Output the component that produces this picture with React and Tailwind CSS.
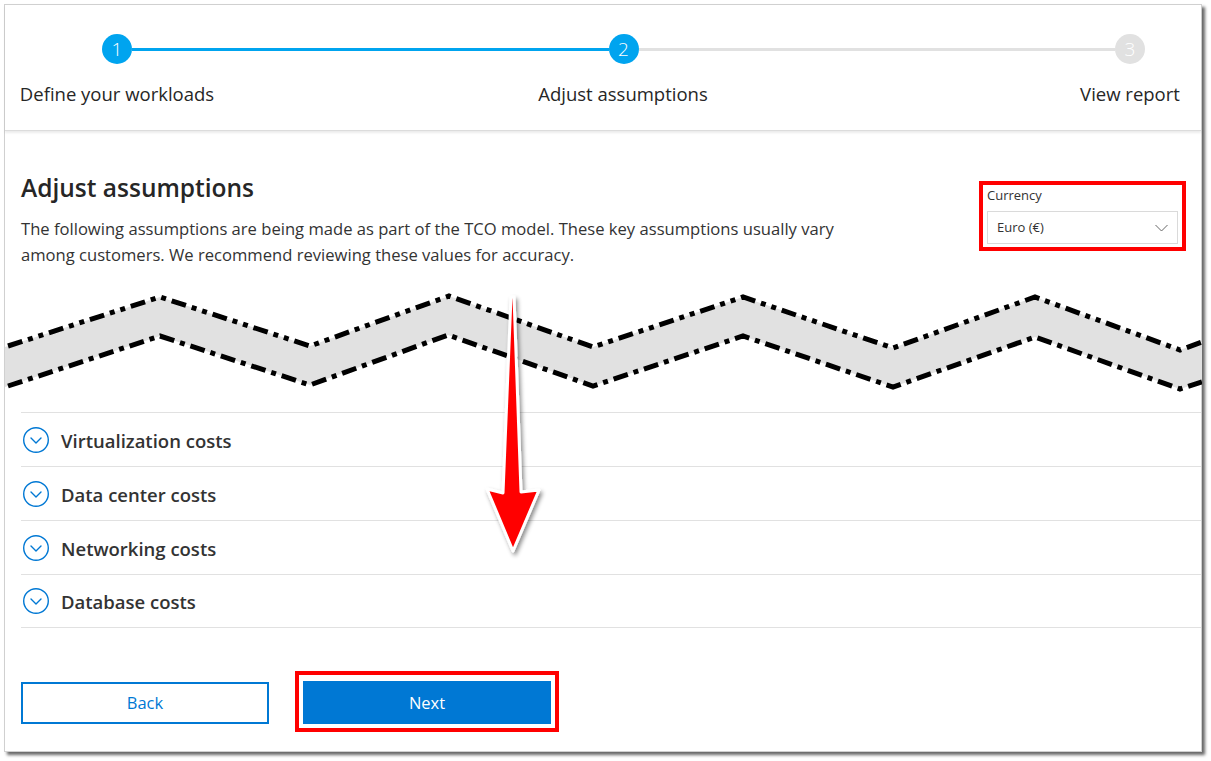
const sections = [
  'Virtualization costs',
  'Data center costs',
  'Networking costs',
  'Database costs',
]

function StepDot({ n, active }) {
  return (
    <div
      className={`flex h-[30px] w-[30px] shrink-0 items-center justify-center rounded-full text-[19px] font-light leading-none text-white ${
        active ? 'bg-[#00a4ef]' : 'bg-[#e1e1e1]'
      }`}
    >
      {n}
    </div>
  )
}

function ChevronCircle() {
  return (
    <svg width="28" height="28" viewBox="0 0 28 28" className="shrink-0">
      <circle cx="14" cy="14" r="12.3" fill="none" stroke="#0078d4" strokeWidth="1.4" />
      <polyline
        points="9,12 14,17 19,12"
        fill="none"
        stroke="#0078d4"
        strokeWidth="1.4"
        strokeLinecap="round"
        strokeLinejoin="round"
      />
    </svg>
  )
}

// torn-paper break between intro and the accordion
function TornEdge() {
  const top = '8,347 160,298 310,347 449,297 593,348 743,298 893,349 1035,298 1180,351 1202,343'
  const bottom = '8,387 160,337 310,386 448,336 593,387 743,337 893,388 1035,338 1180,390 1202,383'
  const band = `5,348 ${top} 1202,383 ${bottom.split(' ').reverse().join(' ')} 5,388`
  return (
    <svg width="1197" height="112" viewBox="5 288 1197 112" className="block">
      <polygon points={band} fill="#e1e1e1" />
      <polyline points={top} fill="none" stroke="#000" strokeWidth="5" strokeDasharray="15 6 5 6 5 6" />
      <polyline points={bottom} fill="none" stroke="#000" strokeWidth="5" strokeDasharray="15 6 5 6" />
    </svg>
  )
}

export default function App() {
  return (
    <div className="relative h-[761px] w-[1211px] overflow-hidden bg-white font-['Open_Sans',sans-serif] text-[#333]">
      <div className="ml-[4px] mt-[4px] flex h-[748px] w-[1198px] flex-col border border-[#d0d0d0] bg-white shadow-[3px_3px_3px_rgba(0,0,0,0.6)]">
        {/* stepper */}
        <header className="h-[126px] border-b border-[#dcdcdc] pt-[29px] shadow-[0_2px_2px_rgba(0,0,0,0.08)]">
          <div className="flex items-center pl-[97px] pr-[56px]">
            <StepDot n="1" active />
            <div className="h-[3px] flex-1 bg-[#00a4ef]" />
            <StepDot n="2" active />
            <div className="h-[3px] flex-1 bg-[#e1e1e1]" />
            <StepDot n="3" />
          </div>
          <div className="mt-[16px] flex pl-[12px] text-[18.5px] leading-[28px] text-[#262626]">
            <span className="w-[200px] text-center">Define your workloads</span>
            <span className="ml-[306px] w-[200px] text-center">Adjust assumptions</span>
            <span className="ml-[347px] w-[120px] text-center">View report</span>
          </div>
        </header>

        {/* intro */}
        <div className="flex justify-between pl-[16px] pr-[15px] pt-[41px]">
          <div>
            <h1 className="text-[24.5px] font-semibold leading-[32px] text-[#262626]">Adjust assumptions</h1>
            <p className="mt-[12px] text-[16.6px] leading-[26px] text-[#333]">
              The following assumptions are being made as part of the TCO model. These key assumptions usually vary
              <br />
              among customers. We recommend reviewing these values for accuracy.
            </p>
          </div>
          <div className="mt-[9px] h-[70px] w-[207px] border-4 border-[#ff0000] px-[4px] pt-[2px]">
            <div className="text-[13px] leading-[16px] text-[#333]">Currency</div>
            <div className="mt-[8px] flex h-[33px] items-center justify-between border border-[#dadada] pl-[9px] pr-[9px] pt-[1px] text-[13px] text-[#333]">
              <span>Euro (€)</span>
              <svg width="13" height="8" viewBox="0 0 13 8">
                <polyline points="0.5,1 6.5,7 12.5,1" fill="none" stroke="#666" strokeWidth="1" />
              </svg>
            </div>
          </div>
        </div>

        <div className="mt-[19px]">
          <TornEdge />
        </div>

        {/* cost sections */}
        <div className="mt-[13px] pl-[16px]">
          {sections.map((s) => (
            <div
              key={s}
              className="flex h-[54px] items-center gap-[11px] border-t border-[#e1e1e1] pl-[1px] last:border-b"
            >
              <ChevronCircle />
              <span className="pt-[2px] text-[18.5px] font-semibold text-[#333]">{s}</span>
            </div>
          ))}
        </div>

        <div className="mt-[43px] flex items-center gap-[26px] pl-[16px]">
          <button
            type="button"
            className="mt-[2px] h-[42px] w-[248px] border-2 border-[#0078d4] bg-white pt-[2px] text-[16.5px] text-[#0078d4]"
          >
            Back
          </button>
          <div className="border-4 border-[#ff0000] px-[4px] pb-[4px] pt-[6px]">
            <button type="button" className="block h-[43px] w-[248px] bg-[#0078d4] pt-[2px] text-[16.5px] text-white">
              Next
            </button>
          </div>
        </div>
      </div>

      {/* annotation arrow */}
      <svg className="pointer-events-none absolute left-0 top-0" width="1211" height="761" viewBox="0 0 1211 761">
        <defs>
          <filter id="sh" x="-50%" y="-10%" width="200%" height="130%">
            <feDropShadow dx="2" dy="3" stdDeviation="2" floodColor="#000" floodOpacity="0.45" />
          </filter>
        </defs>
        <polygon
          points="511,297 514,297 521,492 539,490 513,551 487,489 503,493"
          fill="#ff0000"
          stroke="#fff"
          strokeWidth="3"
          strokeLinejoin="round"
          filter="url(#sh)"
        />
      </svg>
    </div>
  )
}
